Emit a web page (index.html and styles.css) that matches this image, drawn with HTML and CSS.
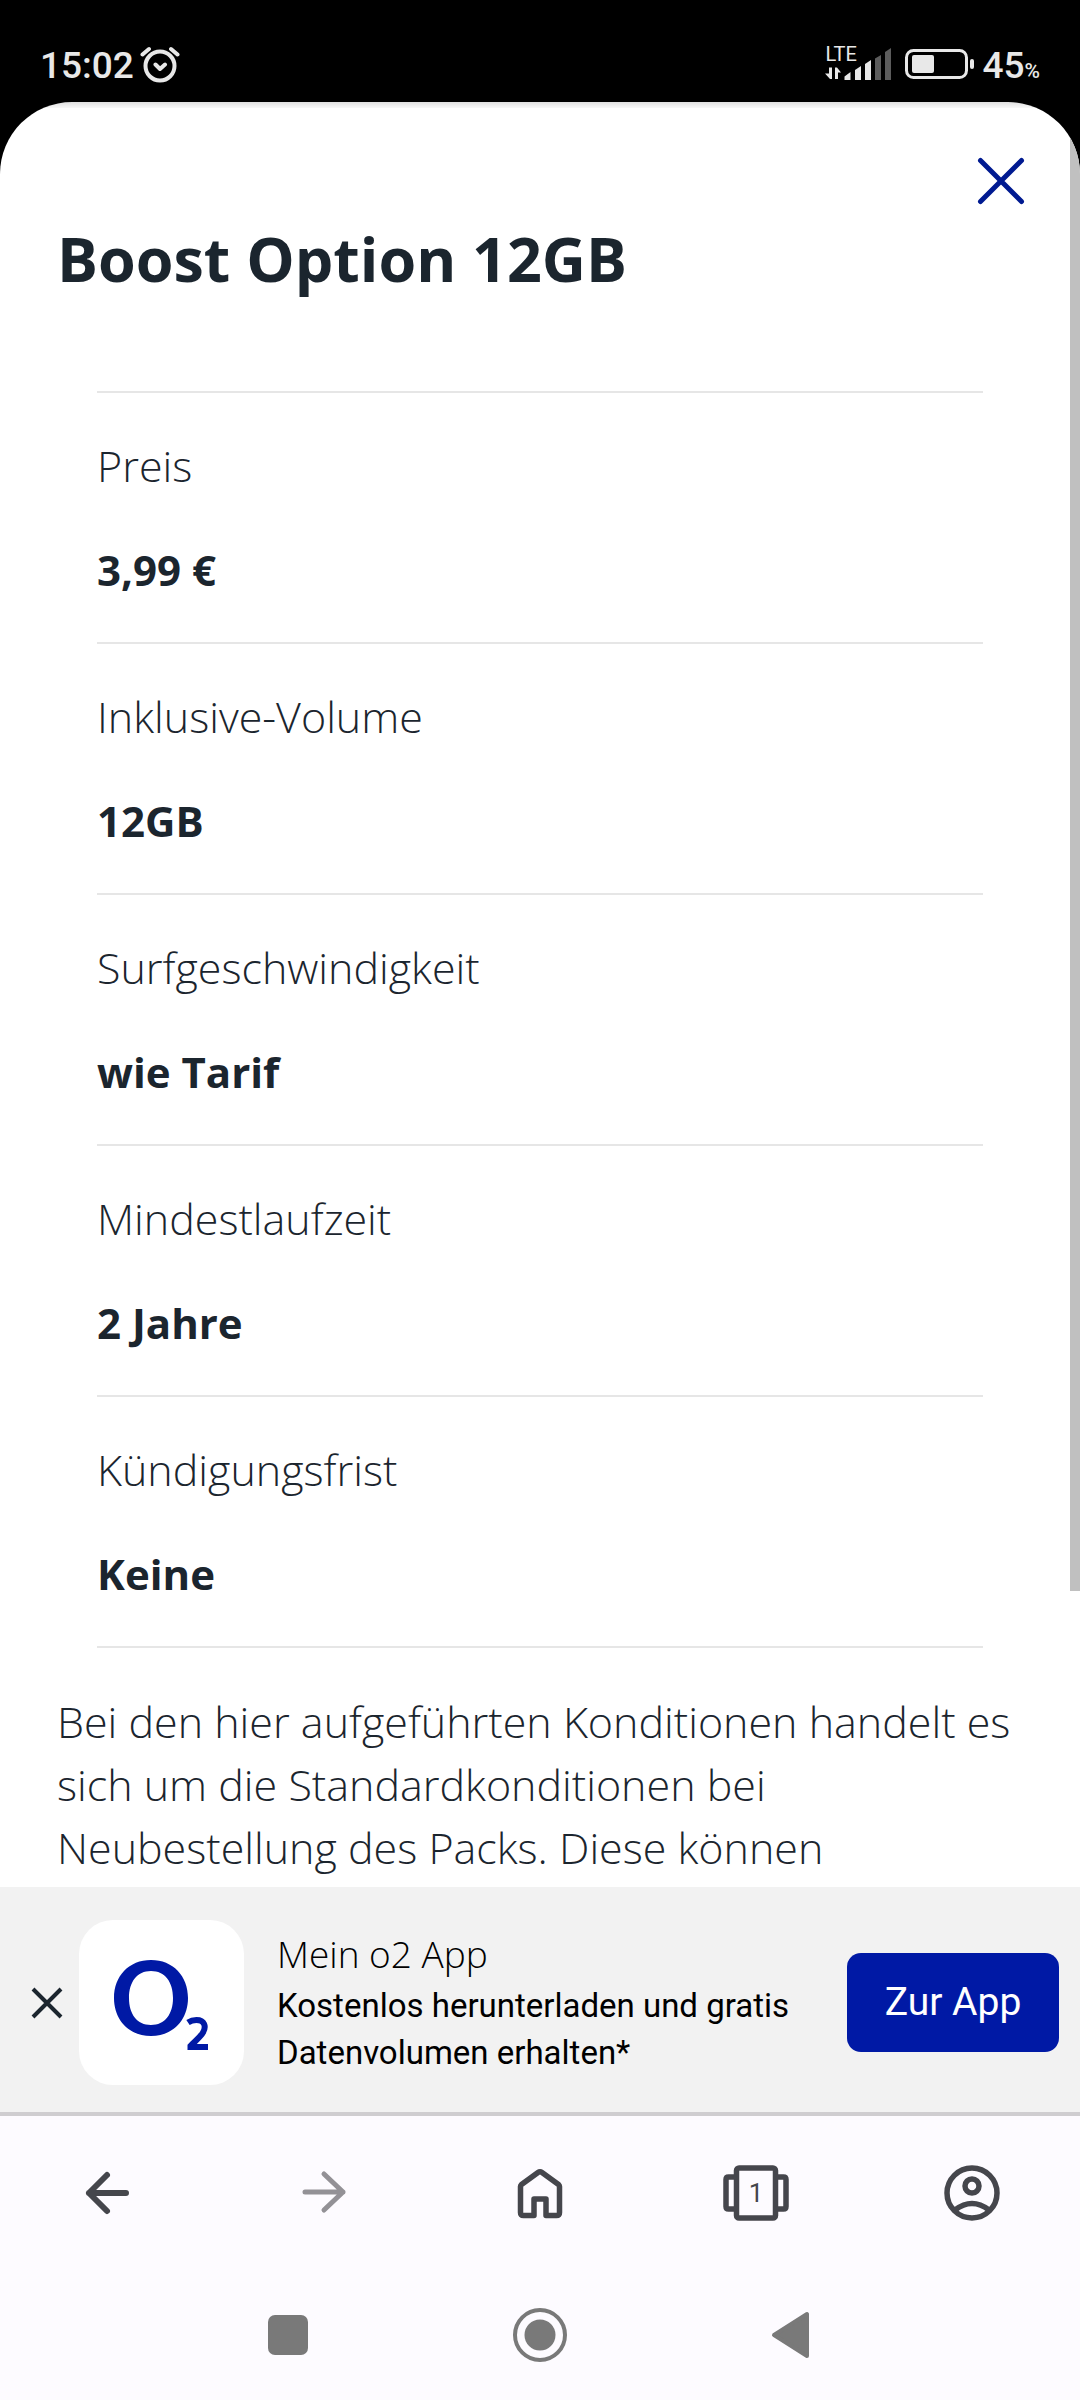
FILE: index.html
```html
<!DOCTYPE html>
<html lang="de">
<head>
<meta charset="utf-8">
<meta name="viewport" content="width=device-width, initial-scale=1">
<title>Boost Option 12GB</title>
<link rel="stylesheet" href="styles.css">
</head>
<body>
<header class="status">
  <div class="status-group">
    <span class="status-time">15:02</span>
    <svg class="alarm" viewBox="0 0 40 40" width="40" height="40" fill="none" stroke="currentColor" stroke-width="4" stroke-linecap="round" stroke-linejoin="round" aria-hidden="true">
      <circle cx="20" cy="22" r="14.5"/>
      <path d="M15.500 20.500 20 25l5-4.500M2.500 10.500 9 5M31 5l6.500 5.500"/>
    </svg>
  </div>
  <div class="status-group">
    <div class="network">
      <span class="lte">LTE</span>
      <svg viewBox="0 0 68 36" width="68" height="36" fill="currentColor" aria-hidden="true">
        <path d="M4 23.500h3V35H5L0 29.500h4zM10 35V23.500h2l4 5h-3V35z"/>
        <path d="M19.500 32.500 25.500 28v8h-6zM30 26l6-4v14h-6zM40 20l6-4v20h-6z"/>
        <path d="M50 14.500 56 11v25h-6zM60 8l6-4v32h-6z" fill="#5c5c5c"/>
      </svg>
    </div>
    <svg class="battery" viewBox="0 0 70 32" width="70" height="32" aria-hidden="true">
      <rect x="1.500" y="2.500" width="60" height="27" rx="7" fill="none" stroke="currentColor" stroke-width="3"/>
      <rect x="7" y="7" width="22" height="18" rx="2" fill="currentColor"/>
      <rect x="65" y="11" width="4" height="10" rx="2" fill="currentColor"/>
    </svg>
    <span class="charge">45<small class="percent">%</small></span>
  </div>
</header>

<main class="sheet">
  <div class="sheet-top">
    <button class="close" type="button" aria-label="Schließen">
      <svg viewBox="0 0 48 48" width="48" height="48" fill="none" stroke="currentColor" stroke-width="5" stroke-linecap="round" aria-hidden="true"><path d="M3.500 3.500l41 41M44.500 3.500l-41 41"/></svg>
    </button>
  </div>
  <h1 class="title">Boost Option 12GB</h1>
  <dl class="facts">
    <div class="fact"><dt>Preis</dt><dd>3,99 €</dd></div>
    <div class="fact"><dt>Inklusive-Volume</dt><dd>12GB</dd></div>
    <div class="fact"><dt>Surfgeschwindigkeit</dt><dd>wie Tarif</dd></div>
    <div class="fact"><dt>Mindestlaufzeit</dt><dd>2 Jahre</dd></div>
    <div class="fact"><dt>Kündigungsfrist</dt><dd>Keine</dd></div>
  </dl>
  <p class="note">Bei den hier aufgeführten Konditionen handelt es<br>sich um die Standardkonditionen bei<br>Neubestellung des Packs. Diese können</p>
  <div class="scrollbar"></div>
</main>

<aside class="banner">
  <button class="dismiss" type="button" aria-label="Banner schließen">
    <svg viewBox="0 0 32 32" width="32" height="32" fill="none" stroke="currentColor" stroke-width="4" aria-hidden="true"><path d="M2 2l28 28M30 2 2 30"/></svg>
  </button>
  <div class="app-icon">
    <svg viewBox="0 0 165 165" width="165" height="165" role="img" aria-label="o2">
      <path fill="#0019a5" fill-rule="evenodd" d="M72 40c22 0 37 16 37 38s-15 38-37 38-37-16-37-38 15-38 37-38zm0 11c-14 0-22 11-22 27s8 27 22 27 22-11 22-27-8-27-22-27z"/>
      <path fill="none" stroke="#0019a5" stroke-width="6" d="M109 102.500c3-2 6-2.500 8.500-2.500 8 0 10 6.500 6.500 12.500-3 5-8.500 9-12.500 13.500v1H129"/>
    </svg>
  </div>
  <div class="banner-text">
    <h2 class="banner-title">Mein o2 App</h2>
    <p class="banner-copy">Kostenlos herunterladen und gratis Datenvolumen erhalten*</p>
  </div>
  <button class="open-app" type="button">Zur App</button>
</aside>

<footer class="bottom">
  <nav class="toolbar" aria-label="Browser">
    <button class="tool" type="button" aria-label="Zurück">
      <svg viewBox="0 0 68 60" width="68" height="60" fill="none" stroke="currentColor" stroke-width="6" stroke-linecap="round" stroke-linejoin="round"><path d="M52 30H15M33 12 15 30l18 18"/></svg>
    </button>
    <button class="tool tool-off" type="button" aria-label="Vorwärts">
      <svg viewBox="0 0 68 60" width="68" height="60" fill="none" stroke="currentColor" stroke-width="5" stroke-linecap="round" stroke-linejoin="round"><path d="M15 29h38M34 11l19 18-19 18"/></svg>
    </button>
    <button class="tool" type="button" aria-label="Startseite">
      <svg viewBox="0 0 68 60" width="68" height="60" fill="none" stroke="currentColor" stroke-width="5.500" stroke-linejoin="round"><path d="M14.500 23.500v26q0 3 3 3h10.500V36h12v16.500h10.500q3 0 3-3v-26q0-1-1-2L36 9.500q-2-1.500-4 0L15.500 21.500q-1 1-1 2z"/></svg>
    </button>
    <button class="tool tabs" type="button" aria-label="Tabs: 1">
      <svg viewBox="0 0 68 60" width="68" height="60" fill="none" stroke="currentColor" stroke-width="5.500" stroke-linejoin="round"><rect x="14.500" y="5" width="39" height="50" rx="2.500"/><path d="M14.500 14H6.500q-2.500 0-2.500 2.500v27q0 2.500 2.500 2.500h8M53.500 14h8q2.500 0 2.500 2.500v27q0 2.500-2.500 2.500h-8"/></svg>
      <span class="tab-count">1</span>
    </button>
    <button class="tool" type="button" aria-label="Profil">
      <svg viewBox="0 0 68 60" width="68" height="60" fill="none" stroke="currentColor" stroke-width="5.500"><circle cx="34" cy="30" r="25"/><circle cx="34" cy="23" r="7"/><path d="M17 47q17-13 34 0"/></svg>
    </button>
  </nav>
  <nav class="system" aria-label="System">
    <button class="key" type="button" aria-label="Übersicht"><svg viewBox="0 0 60 60" width="60" height="60" fill="currentColor"><rect x="10" y="10" width="40" height="40" rx="7"/></svg></button>
    <button class="key" type="button" aria-label="Home"><svg viewBox="0 0 60 60" width="60" height="60"><circle cx="30" cy="30" r="25" fill="none" stroke="currentColor" stroke-width="4"/><circle cx="30" cy="30" r="15.500" fill="currentColor"/></svg></button>
    <button class="key" type="button" aria-label="Zurück"><svg viewBox="0 0 60 60" width="60" height="60" fill="currentColor" stroke="currentColor" stroke-width="4" stroke-linejoin="round"><path d="M12 30 45 9v42z"/></svg></button>
  </nav>
</footer>
</body>
</html>
```

FILE: styles.css
```css
* { box-sizing: border-box; }

body {
  margin: 0;
  min-height: 100vh;
  display: flex;
  flex-direction: column;
  background: #000;
  color: #1b252e;
  font-family: "Open Sans", "Noto Sans", sans-serif;
  font-size: 43px;
  line-height: 63px;
}

h1, h2, p, dl, dd { margin: 0; }

button {
  display: grid;
  place-items: center;
  margin: 0;
  padding: 0;
  border: 0;
  background: none;
  color: inherit;
  font: inherit;
}

svg { display: block; }

/* Status bar */
.status {
  display: flex;
  justify-content: space-between;
  height: 102px;
  padding: 44px 40px 0 40px;
  color: #e8e8e8;
  font-family: Roboto, sans-serif;
  font-size: 37px;
  font-weight: 500;
  line-height: 44px;
}

.status-group { display: flex; }
.alarm { margin-left: 6px; }

.network {
  display: grid;
  margin-right: 12px;
}

.network > * { grid-area: 1 / 1; }

.lte {
  font-size: 20px;
  font-weight: 400;
  line-height: 20px;
}

.battery {
  margin: 4px 7px 0 0;
}

.percent { font-size: 21px; }

/* Sheet */
.sheet {
  position: relative;
  flex: 1;
  overflow: hidden;
  padding: 47px 57px 0;
  border-radius: 72px 72px 0 0;
  background: linear-gradient(#e0e0e0, #f8f8f8 6px, #fff 6px);
}

.sheet-top {
  display: flex;
  justify-content: flex-end;
}

.close {
  width: 64px;
  height: 64px;
  margin-right: -10px;
  color: #001a91;
}

.title {
  margin: 6px 0 92px;
  font-size: 61px;
  font-weight: 700;
  line-height: 80px;
}

.facts {
  margin: 0 40px;
  border-top: 2px solid #e6e6e6;
}

.fact {
  display: grid;
  gap: 41px;
  padding: 41px 0;
  border-bottom: 2px solid #e6e6e6;
}

.fact dt { font-weight: 300; }

.fact dd {
  font-size: 42px;
  font-weight: 700;
}

.note {
  margin: 42px 0 0;
  font-weight: 300;
}

.scrollbar {
  position: absolute;
  top: 0;
  right: 0;
  width: 10px;
  height: 83.4%;
  background: #c0c0c0;
}

/* App banner */
.banner {
  display: flex;
  align-items: center;
  padding: 33px 21px 27px 31px;
  background: #f2f2f2;
  color: #000;
}

.dismiss { color: #1b252e; }

.app-icon {
  margin: 0 33px 0 16px;
  border-radius: 34px;
  background: #fff;
}

.banner-text { flex: 1; }

.banner-title {
  margin-bottom: 3px;
  font-size: 37px;
  font-weight: 300;
  line-height: 50px;
}

.banner-copy {
  max-width: 530px;
  font-family: Roboto, sans-serif;
  font-size: 33px;
  line-height: 47px;
}

.open-app {
  width: 212px;
  height: 99px;
  border-radius: 14px;
  background: #0019a5;
  color: #fff;
  font-family: Roboto, sans-serif;
  font-size: 39px;
}

/* Browser and system navigation */
.bottom {
  border-top: 4px solid #cfcdd0;
  background: #fdfbff;
}

.toolbar {
  display: grid;
  grid-template-columns: repeat(5, 1fr);
  color: #45464c;
}

.tool { height: 154px; }
.tool-off { color: #939196; }
.tool > * { grid-area: 1 / 1; }

.tab-count {
  font-family: Roboto, sans-serif;
  font-size: 26px;
}

.system {
  display: grid;
  grid-template-columns: repeat(3, 252px);
  justify-content: center;
  color: #797979;
}

.key { height: 130px; }
```
